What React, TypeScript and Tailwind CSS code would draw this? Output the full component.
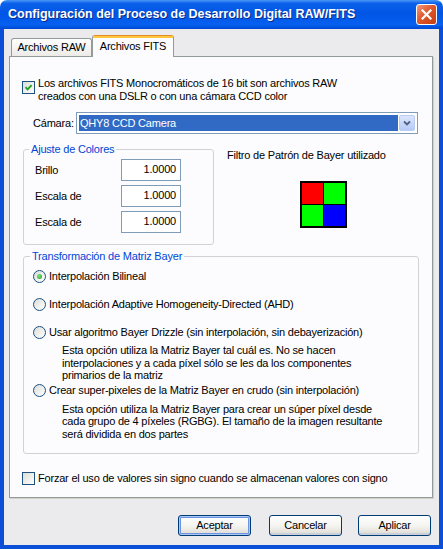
import React from "react";

function Checkbox({ checked }: { checked?: boolean }) {
  return (
    <span className="w-[13px] h-[13px] shrink-0 border border-[#1C5180] bg-[linear-gradient(135deg,#DCDCD7,#FFFFFF)] flex items-center justify-center">
      {checked && (
        <svg width="9" height="9" viewBox="0 0 9 9">
          <path d="M1.5 4.2 L3.6 6.4 L7.6 2.2" stroke="#21A121" strokeWidth="1.9" fill="none" />
        </svg>
      )}
    </span>
  );
}

function Radio({ checked }: { checked?: boolean }) {
  return (
    <span className="w-[13px] h-[13px] shrink-0 rounded-full border border-[#1C5180] bg-[linear-gradient(135deg,#DCDCD7,#FFFFFF)] flex items-center justify-center">
      {checked && (
        <span className="w-[5px] h-[5px] rounded-full bg-[radial-gradient(circle_at_35%_35%,#7BE37B,#21A121)]" />
      )}
    </span>
  );
}

function NumberBox({ value }: { value: string }) {
  return (
    <div className="w-[60px] h-[22px] border border-[#7F9DB9] bg-white flex items-center justify-end pr-[4px] pb-[2px]">
      {value}
    </div>
  );
}

function Button({ label, isDefault }: { label: string; isDefault?: boolean }) {
  return (
    <button
      className={
        "w-[73px] h-[21px] rounded-[3px] border border-[#003C74] bg-[linear-gradient(to_bottom,#FFFFFF,#F3F3EF_55%,#DCD9D0)] text-black " +
        (isDefault
          ? "shadow-[inset_0_0_0_1px_#A9C8F5,inset_0_0_0_2px_#6F93E3]"
          : "shadow-[inset_0_-2px_0_#C8D0DC]")
      }
    >
      {label}
    </button>
  );
}

const radios = [
  { label: "Interpolación Bilineal", checked: true },
  { label: "Interpolación Adaptive Homogeneity-Directed (AHD)" },
];

export default function App() {
  return (
    <div className="w-[443px] h-[549px] flex flex-col overflow-hidden font-['Liberation_Sans',Arial,sans-serif] text-[11px] leading-[13px] tracking-[-0.2px] text-black">
      {/* title bar */}
      <div className="h-[29px] shrink-0 rounded-t-[7px] bg-[linear-gradient(to_bottom,#4A96F6_0%,#0A60EA_12%,#0155E5_45%,#0660F0_85%,#0047D2_100%)] flex items-center justify-between pl-[8px] pr-[6px]">
        <span className="text-white font-bold text-[12.5px] tracking-normal [text-shadow:1px_1px_0_#0A2A8A]">
          Configuración del Proceso de Desarrollo Digital RAW/FITS
        </span>
        <span className="w-[21px] h-[21px] rounded-[3px] border border-white bg-[linear-gradient(135deg,#F09A7C,#E0582C_45%,#C83C12)] flex items-center justify-center">
          <svg width="11" height="11" viewBox="0 0 11 11">
            <path d="M1.5 1.5 L9.5 9.5 M9.5 1.5 L1.5 9.5" stroke="white" strokeWidth="2.2" strokeLinecap="square" />
          </svg>
        </span>
      </div>

      {/* body */}
      <div className="flex-1 flex flex-col bg-[#EBEAED] border-x-4 border-b-4 border-[#0B4ED8] pt-[6px]">
        {/* tabs */}
        <div className="h-[21px] flex items-end pl-[7px]">
          <div className="w-[81px] h-[18px] border border-b-0 border-[#919B9C] rounded-t-[3px] bg-[linear-gradient(to_bottom,#FFFFFF,#ECEBE6)] flex items-center justify-center pb-[1px]">
            Archivos RAW
          </div>
          <div className="relative z-10 -mb-px w-[82px] h-[22px] border border-b-0 border-[#919B9C] border-t-[#E68B2C] rounded-t-[3px] bg-[#FCFCFE] flex flex-col">
            <div className="h-[2px] bg-[#FFC73C]" />
            <div className="flex-1 flex items-center justify-center pb-[3px]">Archivos FITS</div>
          </div>
        </div>

        {/* panel */}
        <div className="ml-[5px] mr-[6px] h-[442px] border border-[#919B9C] bg-[#FCFCFE] shadow-[1px_1px_0_#D3D1C8] flex flex-col">
          <div className="flex items-start pl-[12px] pt-[20px] gap-[3px]">
            <span className="mt-[4px]">
              <Checkbox checked />
            </span>
            <span>
              Los archivos FITS Monocromáticos de 16 bit son archivos RAW
              <br />
              creados con una DSLR o con una cámara CCD color
            </span>
          </div>

          <div className="flex items-center mt-[9px] pl-[23px]">
            <span className="w-[43px]">Cámara:</span>
            <div className="w-[342px] h-[22px] border border-[#7F9DB9] bg-white flex items-stretch p-[2px] gap-[1px]">
              <div className="flex-1 bg-[#316AC5] text-white flex items-center pl-[1px]">QHY8 CCD Camera</div>
              <div className="w-[16px] rounded-[2px] border border-[#B9CBF4] bg-[linear-gradient(to_bottom,#DCE6FD,#B6CAF6)] flex items-center justify-center">
                <svg width="8" height="6" viewBox="0 0 8 6">
                  <path d="M1 1.5 L4 4.5 L7 1.5" stroke="#4D6185" strokeWidth="1.8" fill="none" />
                </svg>
              </div>
            </div>
          </div>

          <div className="flex mt-[9px] pl-[13px]">
            <fieldset className="w-[191px] border border-[#D3D1D8] rounded-[3px] pl-[11px] pt-[3px] pb-[11px] flex flex-col gap-[4px]">
              <legend className="-ml-[6px] px-[2px] text-[#0046D5]">Ajuste de Colores</legend>
              {["Brillo", "Escala de", "Escala de"].map((label, i) => (
                <div key={i} className="flex items-center h-[22px]">
                  <span className="w-[86px]">{label}</span>
                  <NumberBox value="1.0000" />
                </div>
              ))}
            </fieldset>

            <div className="ml-[13px] pt-[6px] flex flex-col">
              <span>Filtro de Patrón de Bayer utilizado</span>
              <div className="mt-[19px] ml-[73px] w-[47px] h-[47px] border-2 border-black bg-black grid grid-cols-2 gap-px">
                <div className="bg-[#FF0000]" />
                <div className="bg-[#00FF00]" />
                <div className="bg-[#00FF00]" />
                <div className="bg-[#0000FF]" />
              </div>
            </div>
          </div>

          <fieldset className="ml-[13px] mt-[5px] w-[396px] border border-[#D3D1D8] rounded-[3px] pl-[9px] pt-[7px] pb-[13px] flex flex-col">
            <legend className="-ml-[3px] px-[2px] text-[#0046D5]">Transformación de Matriz Bayer</legend>
            <div className="flex flex-col gap-[15px]">
              {radios.map((r) => (
                <div key={r.label} className="flex items-center gap-[3px]">
                  <Radio checked={r.checked} />
                  <span>{r.label}</span>
                </div>
              ))}
              <div className="flex items-center gap-[3px]">
                <Radio />
                <span>Usar algoritmo Bayer Drizzle (sin interpolación, sin debayerización)</span>
              </div>
            </div>
            <p className="mt-[5px] ml-[29px] leading-[12.5px]">
              Esta opción utiliza la Matriz Bayer tal cuál es. No se hacen
              <br />
              interpolaciones y a cada píxel sólo se les da los componentes
              <br />
              primarios de la matriz
            </p>
            <div className="mt-[2px] flex items-center gap-[3px]">
              <Radio />
              <span>Crear super-pixeles de la Matriz Bayer en crudo (sin interpolación)</span>
            </div>
            <p className="mt-[6px] ml-[29px] leading-[12.5px]">
              Esta opción utiliza la Matriz Bayer para crear un súper píxel desde
              <br />
              cada grupo de 4 píxeles (RGBG). El tamaño de la imagen resultante
              <br />
              será dividida en dos partes
            </p>
          </fieldset>

          <div className="mt-[18px] pl-[12px] flex items-center gap-[3px]">
            <Checkbox />
            <span>Forzar el uso de valores sin signo cuando se almacenan valores con signo</span>
          </div>
        </div>

        {/* buttons */}
        <div className="mt-[17px] flex justify-end pr-[8px]">
          <Button label="Aceptar" isDefault />
          <span className="w-[18px]" />
          <Button label="Cancelar" />
          <span className="w-[16px]" />
          <Button label="Aplicar" />
        </div>
      </div>
    </div>
  );
}
